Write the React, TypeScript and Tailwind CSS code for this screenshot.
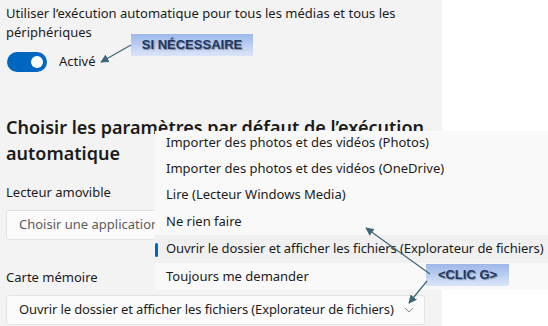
import React from "react";

const font = { fontFamily: '"Noto Sans", "Open Sans", sans-serif' };

function Chevron() {
  return (
    <svg width="10" height="6" viewBox="0 0 10 6" className="shrink-0">
      <path d="M1 1 L5 5 L9 1" fill="none" stroke="#8a8a8a" strokeWidth="1" />
    </svg>
  );
}

const items = [
  { t: "Importer des photos et des vidéos (Photos)", h: "h-[24px]" },
  { t: "Importer des photos et des vidéos (OneDrive)", h: "h-[27px]" },
  { t: "Lire (Lecteur Windows Media)", h: "h-[26px]" },
  { t: "Ne rien faire", h: "h-[27px]" },
  { t: "Ouvrir le dossier et afficher les fichiers (Explorateur de fichiers)", h: "h-[28px]", sel: true },
  { t: "Toujours me demander", h: "h-[27px]" },
];

export default function App() {
  return (
    <div className="relative w-[548px] h-[326px] overflow-hidden bg-white text-[#1b1b1b]" style={font}>
      <div className="w-[442px] h-full bg-[#f3f3f3] pl-[6px] pt-[4px]">
        <p className="text-[13px] leading-[19px] w-[420px]">
          Utiliser l’exécution automatique pour tous les médias et tous les périphériques
        </p>
        <div className="mt-[10px] flex items-center gap-[12px] h-[20px]">
          <div className="w-[40px] h-[20px] rounded-full bg-[#0067c0] flex items-center justify-end pr-[4px] ml-[1px]">
            <div className="w-[12px] h-[12px] rounded-full bg-white" />
          </div>
          <span className="text-[13px]">Activé</span>
        </div>
        <h2 className="mt-[42px] text-[18px] leading-[26px] font-semibold w-[436px]">
          Choisir les paramètres par défaut de l’exécution automatique
        </h2>
        <p className="mt-[16px] text-[13px] leading-[20px]">Lecteur amovible</p>
        <div className="mt-[8px] w-[419px] h-[30px] bg-[#fbfbfb] border border-[#e3e3e3] rounded-[3px] flex items-center px-[12px]">
          <span className="text-[13px] text-[#5c5c5c]">Choisir une application</span>
        </div>
        <p className="mt-[27px] text-[13px] leading-[20px]">Carte mémoire</p>
        <div className="mt-[8px] w-[419px] h-[30px] bg-[#fbfbfb] border border-[#e3e3e3] rounded-[3px] flex items-center justify-between pl-[12px] pr-[10px]">
          <span className="text-[13px] tracking-[-0.12px] whitespace-nowrap">Ouvrir le dossier et afficher les fichiers (Explorateur de fichiers)</span>
          <Chevron />
        </div>
      </div>

      {/* dropdown menu */}
      <div className="absolute left-[155px] top-[131px] w-[420px] bg-[#f9f9f9] flex flex-col">
        {items.map((it) => (
          <div
            key={it.t}
            className={`relative flex items-center pl-[11px] text-[13px] whitespace-nowrap ${it.h} ${it.sel ? "bg-[#f0f0f0] tracking-[-0.08px]" : ""}`}
          >
            {it.sel && <div className="absolute left-0 top-[8px] w-[3px] h-[14px] rounded-full bg-[#0067c0]" />}
            {it.t}
          </div>
        ))}
      </div>

      {/* annotations */}
      <div
        className="absolute left-[131px] top-[34px] w-[122px] h-[22px] flex items-center justify-center bg-gradient-to-b from-[#9cb7e9] to-[#dbe5f8] text-[13px] font-bold text-[#1f3864] [text-shadow:1px_1px_1px_rgba(0,0,0,0.35)]"
        style={{ fontFamily: '"Liberation Sans", Arial, sans-serif' }}
      >
        SI NÉCESSAIRE
      </div>
      <div
        className="absolute left-[426px] top-[264px] w-[83px] h-[22px] flex items-center justify-center bg-gradient-to-b from-[#9cb7e9] to-[#dbe5f8] text-[13px] font-bold text-[#1f3864] [text-shadow:1px_1px_1px_rgba(0,0,0,0.35)]"
        style={{ fontFamily: '"Liberation Sans", Arial, sans-serif' }}
      >
        &lt;CLIC G&gt;
      </div>
      <svg className="absolute left-0 top-0 pointer-events-none" width="548" height="326">
        <defs>
          <marker id="ah" viewBox="0 0 10 10" refX="9" refY="5" markerWidth="7" markerHeight="7" orient="auto-start-reverse">
            <path d="M0 0 L10 5 L0 10 z" fill="#3d6679" />
          </marker>
        </defs>
        <line x1="131" y1="45" x2="101" y2="62" stroke="#3d6679" strokeWidth="1.2" markerEnd="url(#ah)" />
        <line x1="430" y1="274" x2="366" y2="228" stroke="#3d6679" strokeWidth="1.2" markerEnd="url(#ah)" />
        <line x1="427" y1="281" x2="409" y2="303" stroke="#3d6679" strokeWidth="1.2" markerEnd="url(#ah)" />
      </svg>
    </div>
  );
}
